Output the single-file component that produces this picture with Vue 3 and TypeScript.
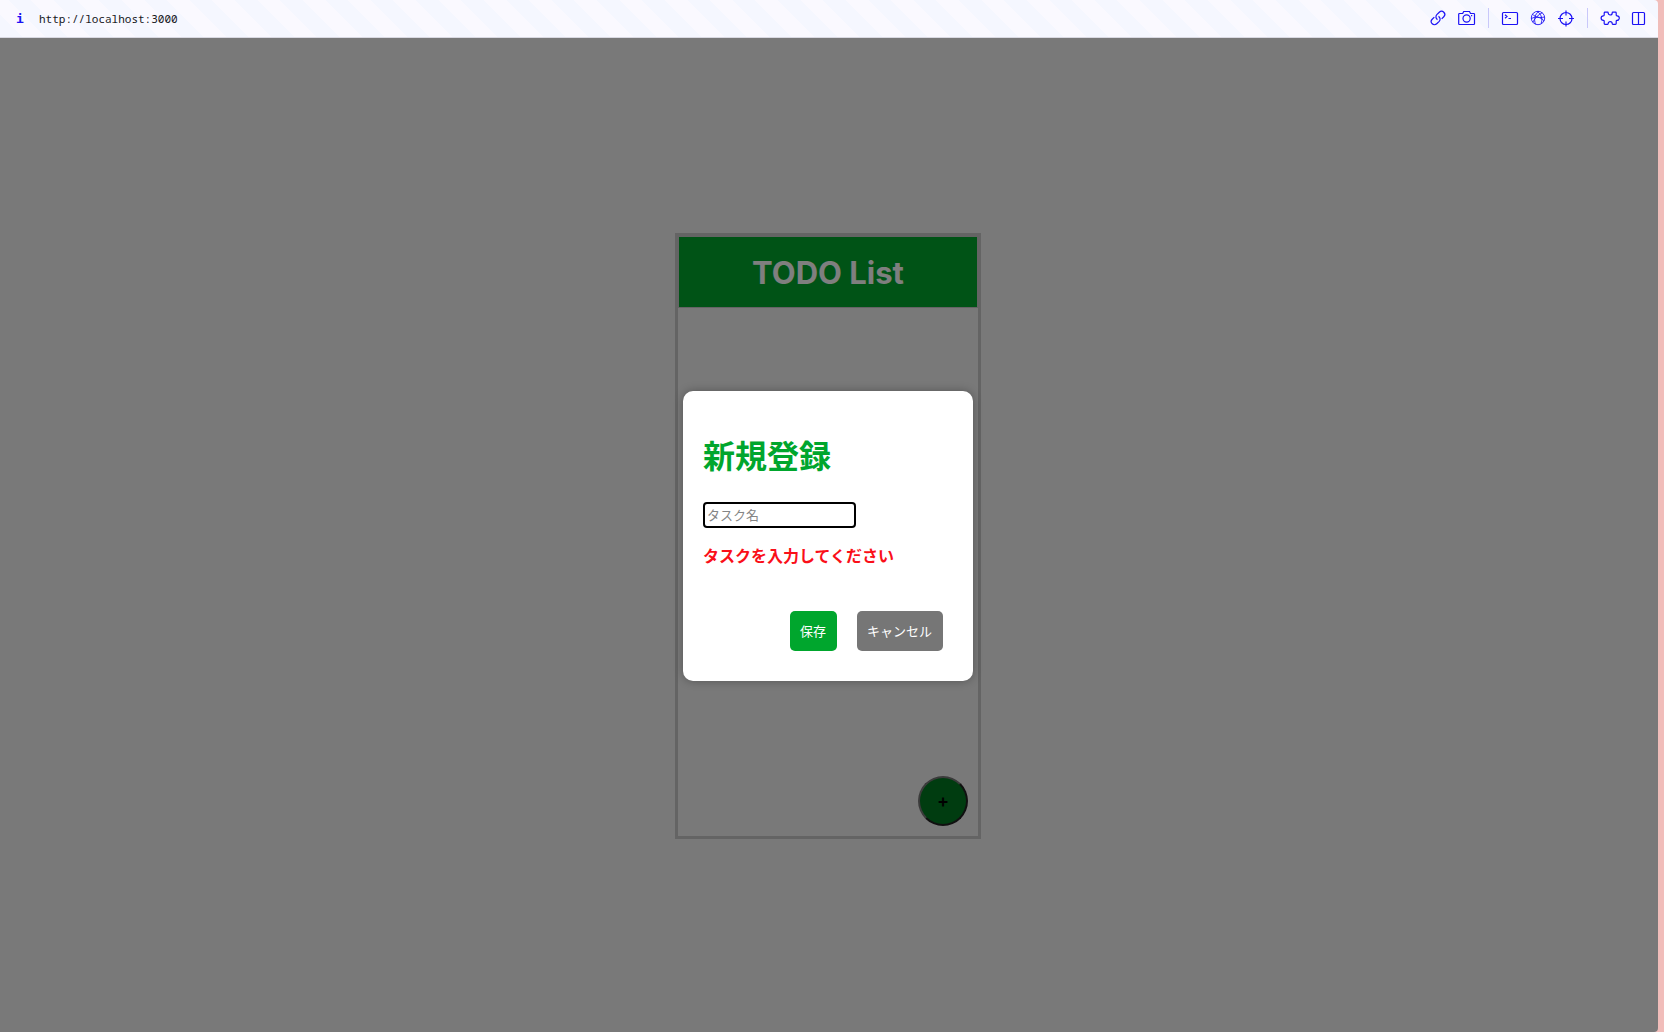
<script setup lang="ts">
import { ref } from 'vue'

const url = ref('http://localhost:3000')
const taskName = ref('')
const errorText = 'タスクを入力してください'
</script>

<template>
  <div class="browser">
    <header class="toolbar">
      <span class="info" aria-hidden="true">i</span>
      <input v-model="url" class="address" type="text" aria-label="URL" />
      <nav class="tools" aria-label="Tools">
        <button type="button" aria-label="Copy link">
          <svg width="18" height="18" viewBox="0 0 18 18">
            <g transform="rotate(-45 8 9)">
              <path d="M9.500 8.200a3.200 3.200 0 0 1-3 4h-3.500a3.200 3.200 0 0 1 0-6.400h3" />
              <path d="M6.500 9.800a3.200 3.200 0 0 1 3-4h3.500a3.200 3.200 0 0 1 0 6.400h-3" />
            </g>
          </svg>
        </button>
        <button type="button" aria-label="Screenshot">
          <svg width="18" height="18" viewBox="0 0 18 18">
            <path d="M1.500 4.500h3.200l1-2h5.800l1 2h3.200q.8 0 .8 .8v9.400q0 .8-.8 .8H1.500q-.8 0-.8-.8V5.300q0-.8 .8-.8z" />
            <circle cx="8.600" cy="9.500" r="3.600" />
            <path d="M13 6.600h1.200" />
          </svg>
        </button>
        <i class="rule" />
        <button type="button" aria-label="Console">
          <svg width="18" height="18" viewBox="0 0 18 18">
            <rect x="1.500" y="3.500" width="15" height="12" rx="1" />
            <path d="M4 5.800l2 1.700-2 1.700M7.500 9.500H10" />
          </svg>
        </button>
        <button type="button" aria-label="Network">
          <svg width="18" height="18" viewBox="0 0 18 18" class="fine">
            <circle cx="9" cy="9" r="6.700" />
            <path d="M10 2.300C6 5 4.500 10 6.500 15.200M8 2.300c4.500 3 6 8 4 12.300M3.500 5.200c3 3 7 4 12 2.800M2.400 9.500c4-2 9-2 12.800 2.500M3.800 13.200c2-4 6-8 9.500-9.500" />
          </svg>
        </button>
        <button type="button" aria-label="Inspect">
          <svg width="18" height="18" viewBox="0 0 18 18">
            <circle cx="9" cy="9.500" r="6" />
            <path d="M9 1.500v5M9 12.500v5M1 9.500h5M12 9.500h5" />
          </svg>
        </button>
        <i class="rule" />
        <button type="button" aria-label="Extensions">
          <svg width="20" height="18" viewBox="0 0 20 18">
            <path d="M5 3.200h2.600q.6 0 .6 .8a2 2 0 0 0 4 0q0-.8 .6-.8h2.600q.8 0 .8 .8v2q0 .8 .8 .8a2.300 2.300 0 0 1 0 4.600q-.8 0-.8 .8v2.400q0 .8-.8 .8h-2.600q-.6 0-.6-.8a2 2 0 0 0-4 0q0 .8-.6 .8H5q-.8 0-.8-.8v-2.400q0-.8-.8-.8a2.300 2.300 0 0 1 0-4.600q.8 0 .8-.8V4q0-.8 .8-.8z" />
          </svg>
        </button>
        <button type="button" aria-label="Split view">
          <svg width="18" height="18" viewBox="0 0 18 18">
            <rect x="2.500" y="3.500" width="12" height="12" rx="1" />
            <path d="M8.500 3.500v12" />
          </svg>
        </button>
      </nav>
    </header>
    <main class="page">
      <section class="app">
        <h1 class="title">TODO List</h1>
        <button class="add" type="button">+</button>
      </section>
      <div class="overlay">
        <form class="modal" role="dialog" aria-labelledby="dialog-title" @submit.prevent>
          <h2 id="dialog-title">新規登録</h2>
          <input v-model="taskName" class="task" type="text" placeholder="タスク名" aria-label="タスク名" />
          <p class="error">{{ errorText }}</p>
          <div class="actions">
            <button class="save" type="submit">保存</button>
            <button class="cancel" type="button">キャンセル</button>
          </div>
        </form>
      </div>
    </main>
  </div>
</template>

<style>
body {
  background: #f1bdba;
}
</style>

<style scoped>
* {
  box-sizing: border-box;
}
.browser {
  display: flex;
  flex-direction: column;
  min-height: 100vh;
  margin-right: 6px;
  border-radius: 0 4px 4px 0;
  overflow: hidden;
  font-family: Inter, "Noto Sans CJK JP", sans-serif;
}
.toolbar {
  display: flex;
  align-items: center;
  height: 38px;
  padding: 0 10px 0 16px;
  border-bottom: 1px solid #d9d9e2;
  background: repeating-linear-gradient(45deg, #f5f7ff 0 16px, #faf9ff 16px 32px);
}
.info {
  width: 8px;
  margin-right: 15px;
  color: #1b12f5;
  font: bold 13px/20px "DejaVu Sans Mono", monospace;
}
.address {
  flex: 1;
  min-width: 0;
  padding: 0;
  border: 0;
  outline: 0;
  background: none;
  color: #16161c;
  font: 11px/20px "Noto Sans Mono", "DejaVu Sans Mono", monospace;
}
.tools {
  display: flex;
  align-items: center;
  gap: 10px;
  padding-bottom: 1px;
}
.tools button {
  display: flex;
  padding: 0;
  border: 0;
  background: none;
}
.tools svg {
  fill: none;
  stroke: #1c12f5;
  stroke-width: 1.2;
}
.tools .fine {
  stroke-width: 0.9;
}
.rule {
  width: 1px;
  height: 20px;
  margin: 0 2px;
  background: #c9c8fa;
}
.page {
  position: relative;
  flex: 1;
  display: flex;
  align-items: center;
  justify-content: center;
  padding: 2px 2px 0 0;
  background: #f2f2f2;
}
.app {
  display: flex;
  flex-direction: column;
  justify-content: space-between;
  width: 306px;
  height: 606px;
  border: 3px solid #c8c8c8;
}
.title {
  margin: 0;
  padding: 17px 0 15px;
  border: 1px solid #c8c8c8;
  background: #00a62d;
  color: #fff;
  text-align: center;
  font-size: 31px;
  line-height: 38px;
}
.add {
  align-self: flex-end;
  width: 50px;
  height: 50px;
  margin: 0 10px 10px 0;
  padding: 0;
  border: 2px outset #767676;
  border-radius: 50%;
  background: #007820;
  color: #000;
  font: 600 18px/20px Inter, sans-serif;
}
.overlay {
  position: absolute;
  inset: 0;
  display: flex;
  align-items: center;
  justify-content: center;
  padding: 2px 2px 0 0;
  background: rgba(0, 0, 0, 0.5);
}
.modal {
  width: 290px;
  padding: 41px 30px 30px 20px;
  border-radius: 10px;
  background: #fff;
  box-shadow: 0 0 10px rgba(0, 0, 0, 0.3);
}
.modal h2 {
  margin: 0 0 20px;
  color: #00a62d;
  font-size: 32px;
  line-height: 50px;
}
.task {
  display: block;
  width: 153px;
  height: 26px;
  padding: 0 2px 2px;
  border: 2px solid #000;
  border-radius: 4px;
  outline: 0;
  font: 13px/20px "Noto Sans CJK JP", sans-serif;
}
.task::placeholder {
  color: #858585;
}
.error {
  margin: 16px 0 42px;
  color: #fa0f19;
  font-size: 16px;
  font-weight: bold;
  line-height: 25px;
}
.actions {
  display: flex;
  justify-content: flex-end;
  gap: 20px;
}
.actions button {
  height: 40px;
  padding: 0 11px 0 10px;
  border: 0;
  border-radius: 5px;
  color: #fff;
  font: 13px/20px "Noto Sans CJK JP", sans-serif;
}
.actions .save {
  background: #00a62d;
}
.actions .cancel {
  background: #767676;
}
</style>
